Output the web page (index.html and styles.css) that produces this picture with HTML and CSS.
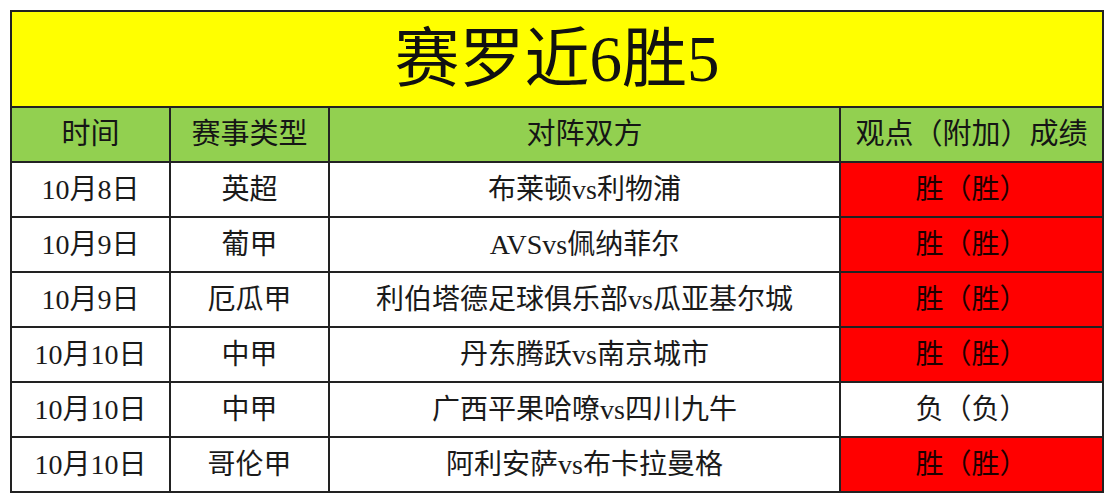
FILE: index.html
```html
<!DOCTYPE html>
<html lang="zh-CN">
<head>
<meta charset="utf-8">
<link rel="stylesheet" href="styles.css">
</head>
<body>
<table class="sheet">
  <colgroup>
    <col class="c-time"><col class="c-type"><col class="c-match"><col class="c-result">
  </colgroup>
  <tr class="title-row"><td colspan="4" class="title">赛罗近6胜5</td></tr>
  <tr class="head-row">
    <td>时间</td><td>赛事类型</td><td>对阵双方</td><td>观点（附加）成绩</td>
  </tr>
  <tr><td>10月8日</td><td>英超</td><td>布莱顿vs利物浦</td><td class="win">胜（胜）</td></tr>
  <tr><td>10月9日</td><td>葡甲</td><td>AVSvs佩纳菲尔</td><td class="win">胜（胜）</td></tr>
  <tr><td>10月9日</td><td>厄瓜甲</td><td>利伯塔德足球俱乐部vs瓜亚基尔城</td><td class="win">胜（胜）</td></tr>
  <tr><td>10月10日</td><td>中甲</td><td>丹东腾跃vs南京城市</td><td class="win">胜（胜）</td></tr>
  <tr><td>10月10日</td><td>中甲</td><td>广西平果哈嘹vs四川九牛</td><td>负（负）</td></tr>
  <tr><td>10月10日</td><td>哥伦甲</td><td>阿利安萨vs布卡拉曼格</td><td class="win">胜（胜）</td></tr>
</table>
</body>
</html>
```
FILE: styles.css
```css
html, body {
  margin: 0;
  padding: 0;
  background: #ffffff;
}
body {
  padding: 10px 0 0 10px;
  font-family: "Liberation Serif", "Noto Sans CJK SC", serif;
  color: #1a1a1a;
}
.sheet {
  border-collapse: collapse;
  table-layout: fixed;
  width: 1092px;
}
.c-time { width: 159px; }
.c-type { width: 159px; }
.c-match { width: 511px; }
.c-result { width: 263px; }
.sheet td {
  border: 2px solid #222222;
  text-align: center;
  vertical-align: middle;
  font-size: 28px;
  height: 53px;
  padding: 0;
  line-height: 1;
  white-space: nowrap;
}
.title-row td {
  background: #ffff00;
  height: 94px;
  font-size: 65px;
  color: #111111;
}
.head-row td {
  background: #92d050;
  font-size: 29px;
  color: #151515;
}
.sheet td.win {
  background: #ff0000;
  color: #1e0000;
}
```
